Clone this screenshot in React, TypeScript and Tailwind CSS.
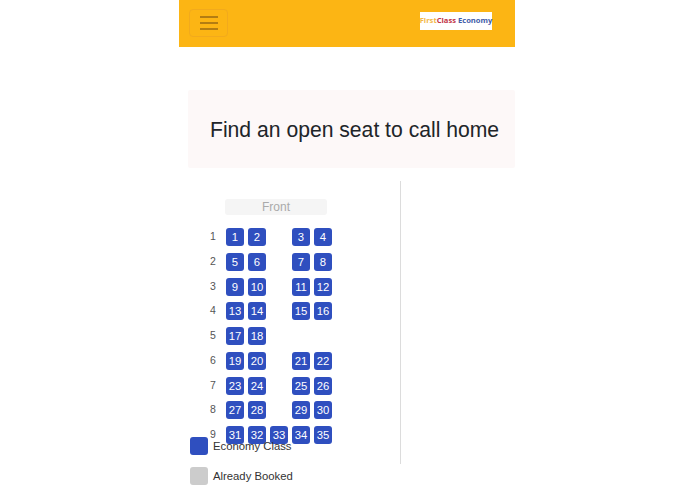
const rows: (number | null)[][] = [
  [1, 2, null, 3, 4],
  [5, 6, null, 7, 8],
  [9, 10, null, 11, 12],
  [13, 14, null, 15, 16],
  [17, 18, null, null, null],
  [19, 20, null, 21, 22],
  [23, 24, null, 25, 26],
  [27, 28, null, 29, 30],
  [31, 32, 33, 34, 35],
];

function Seat({ n }: { n: number | null }) {
  if (n === null) return <div className="w-[18px] h-[18px]"></div>;
  return (
    <div className="w-[18px] h-[18px] rounded-[3px] bg-[#2f4fbf] text-white text-[11.3px] leading-[18px] text-center">
      {n}
    </div>
  );
}

export default function App() {
  return (
    <div className="ml-[179px] w-[336px] font-['Liberation_Sans',Arial,sans-serif] text-[#212529]">
      <header className="h-[47px] bg-[#fcb514] flex items-center justify-between pl-[10px] pr-[23px]">
        <button className="w-[39px] h-[28px] -mt-[1px] border border-[#f2aa1c] rounded-[4px] flex items-center justify-center">
          <svg width="18" height="14" viewBox="0 0 18 14" fill="none" stroke="#9a6b12" strokeWidth="1.3">
            <path d="M0 1h18M0 7h18M0 13h18" />
          </svg>
        </button>
        <div className="w-[72px] h-[18px] -mt-[5px] bg-white flex items-center justify-center font-['Open_Sans',sans-serif] font-bold text-[7.6px] whitespace-nowrap">
          <span className="text-[#f3b94a]">First</span>
          <span className="text-[#c23347]">Class</span>
          <span className="text-[#3f5ca8] ml-[2px]">Economy</span>
        </div>
      </header>

      <div className="mt-[43px] ml-[9px] h-[78px] bg-[#fdf8f8] flex items-center pl-[22px] pt-[2px] text-[21.15px] whitespace-nowrap rounded-[2px]">
        Find an open seat to call home
      </div>

      <div className="mt-[13px] h-[256px]">
        <div className="w-[222px] h-[283px] border-r border-[#dcdcdc] pt-[18px]">
          <div className="ml-[46px] w-[102px] h-[16px] bg-[#f5f5f5] rounded-[3px] text-[#aaaaaa] text-[12px] leading-[16px] text-center">
            Front
          </div>
          <div className="mt-[13px] flex flex-col gap-[6.75px]">
            {rows.map((row, i) => (
              <div key={i} className="flex items-center h-[18px]">
                <div className="ml-[31px] w-[16px] text-[10.5px] text-[#555555]">{i + 1}</div>
                <div className="flex gap-[4px]">
                  {row.map((n, j) => (
                    <Seat key={j} n={n} />
                  ))}
                </div>
              </div>
            ))}
          </div>
        </div>
      </div>

      <div className="relative ml-[11px] flex flex-col gap-[12px]">
        <div className="flex items-center gap-[5px] h-[18px]">
          <div className="w-[18px] h-[18px] rounded-[3px] bg-[#2f4fbf]"></div>
          <span className="text-[11.3px] text-[#333333]">Economy Class</span>
        </div>
        <div className="flex items-center gap-[5px] h-[18px]">
          <div className="w-[18px] h-[18px] rounded-[3px] bg-[#cccccc]"></div>
          <span className="text-[11.3px] text-[#333333]">Already Booked</span>
        </div>
      </div>
    </div>
  );
}
